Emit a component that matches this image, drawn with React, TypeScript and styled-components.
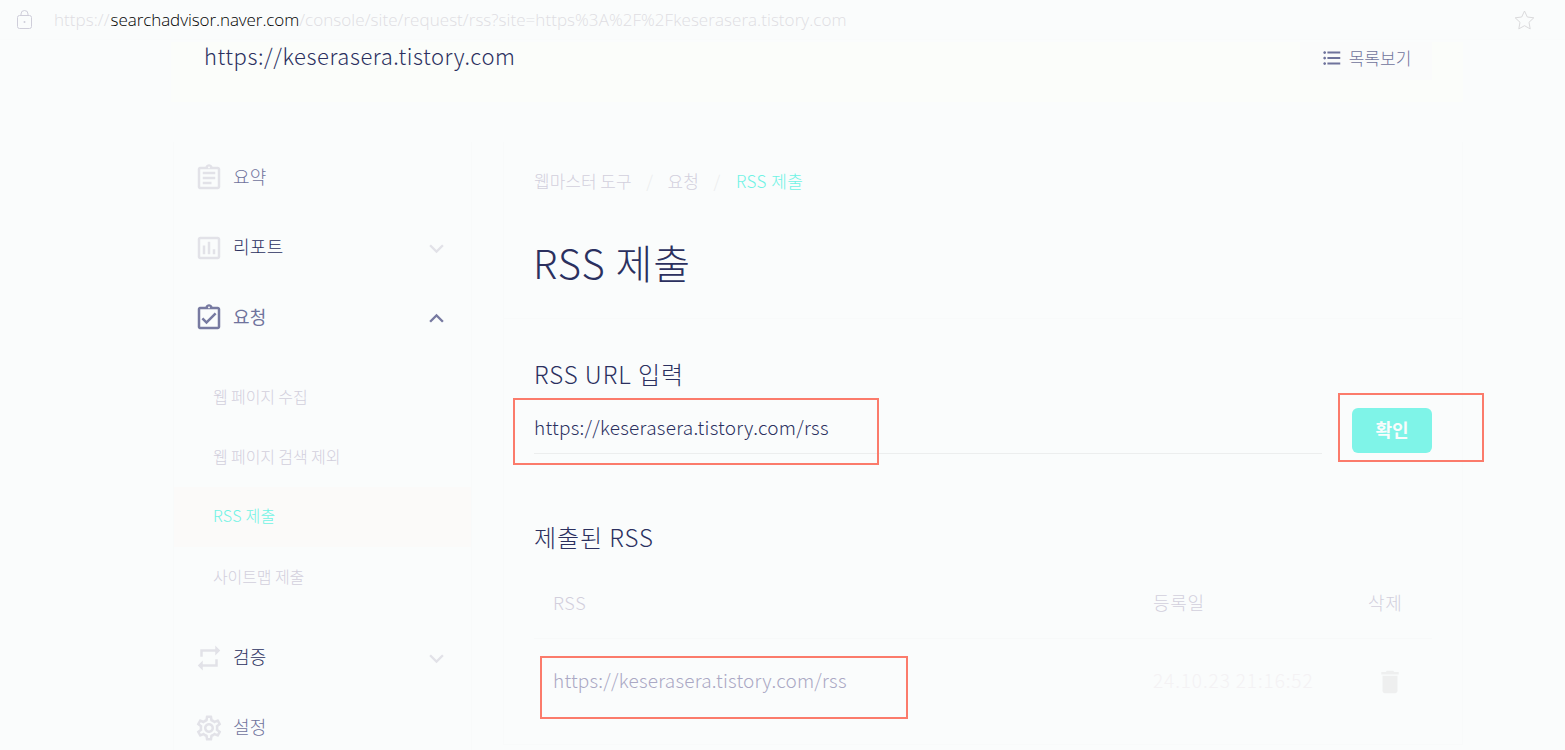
import React from "react";
import styled, { createGlobalStyle } from "styled-components";
import {
  MdDelete,
  MdFormatListBulleted,
  MdKeyboardArrowDown,
  MdKeyboardArrowUp,
  MdOutlineAssessment,
  MdOutlineAssignment,
  MdOutlineAssignmentTurnedIn,
  MdOutlineSettings,
  MdRepeat,
} from "react-icons/md";

const GlobalStyle = createGlobalStyle`
  * {
    box-sizing: border-box;
  }
  body {
    margin: 0;
    background: #fafcfc;
    font-family: "Noto Sans CJK KR", "Noto Sans", sans-serif;
    font-weight: 300;
    overflow: hidden;
  }
  h1, h2, p {
    margin: 0;
    font-weight: 300;
  }
`;

const PageDiv = styled.div`
  position: relative;
  width: 1565px;
  height: 750px;
  overflow: hidden;
`;

const AddressBarDiv = styled.div`
  height: 40px;
  padding: 0 30px 0 17px;
  display: flex;
  align-items: center;
  border-bottom: 1px solid #f9fbfb;
`;

const AddressP = styled.p`
  flex: 1;
  margin-left: 22px;
  font-family: "Open Sans", sans-serif;
  font-size: 17px;
  line-height: 38px;
  letter-spacing: 0.06px;
  color: #dfdee3;
  white-space: nowrap;
`;

const HostSpan = styled.span`
  margin-left: 1px;
  letter-spacing: -0.07px;
  color: #000;
`;

const SiteHeaderDiv = styled.header`
  width: 1292px;
  height: 60px;
  margin: 2px 0 0 171px;
  padding: 0 31px 0 33px;
  display: flex;
  justify-content: space-between;
  align-items: flex-start;
  background: #fbfdfa;
`;

const SiteP = styled.p`
  font-size: 22px;
  line-height: 26px;
  letter-spacing: 0.55px;
  color: #2b305f;
`;

const ListButton = styled.button`
  width: 132px;
  height: 38px;
  padding: 0 0 6px;
  display: flex;
  align-items: center;
  justify-content: center;
  gap: 6px;
  border: 0;
  background: #fafbfb;
  font: inherit;
  font-size: 17px;
  color: #6f739c;
`;

const ListLabelSpan = styled.span`
  margin-top: -2px;
`;

const BodyDiv = styled.div`
  display: flex;
  gap: 31px;
  margin: 40px 0 0 173px;
`;

const SideNav = styled.nav`
  width: 299px;
  height: 640px;
  border: 1px solid #f8fafa;
  border-width: 0 1px;
`;

const NavRowDiv = styled.div`
  height: 70px;
  padding: 2px 20px 0 20px;
  display: flex;
  align-items: center;
  color: #e2e2e8;
`;

const NavLabelSpan = styled.span<{ $color: string; $bold?: boolean }>`
  flex: 1;
  margin: -5px 0 0 9px;
  font-size: 18px;
  font-weight: ${(props) => (props.$bold ? 400 : 300)};
  letter-spacing: 0.3px;
  color: ${(props) => props.$color};
`;

const SubMenuDiv = styled.div`
  padding: 15px 0;
`;

const SubItemDiv = styled.div<{ $active?: boolean }>`
  height: 60px;
  padding-left: 39px;
  font-size: 16px;
  line-height: ${(props) => (props.$active ? 57 : 58)}px;
  letter-spacing: ${(props) => (props.$active ? 0.3 : -0.1)}px;
  color: ${(props) => (props.$active ? "#70f3e5" : "#d2cfdc")};
  background: ${(props) => (props.$active ? "#fbfaf9" : "transparent")};
`;

const MainDiv = styled.main`
  width: 960px;
`;

const TitleCardDiv = styled.div`
  height: 177px;
  padding: 26px 30px 0;
  border: 1px solid #f8fafa;
  border-width: 0 1px 1px;
`;

const BreadcrumbDiv = styled.div`
  display: flex;
  font-size: 17px;
  line-height: 26px;
  color: #d2cfdc;
`;

const SlashSpan = styled.span`
  width: 36px;
  text-align: center;
  color: #ecedee;
`;

const CurrentSpan = styled.span`
  margin-left: 1px;
  letter-spacing: 0.5px;
  color: #70f3e5;
`;

const TitleH1 = styled.h1`
  margin: 38px 0 0 -1px;
  font-size: 40px;
  line-height: 60px;
  letter-spacing: 1px;
  color: #2b305f;
`;

const ContentCardDiv = styled.div`
  height: 426px;
  padding: 35px 30px 0;
  border: 1px solid #f8fafa;
  border-width: 0 1px 1px;
`;

const SectionH2 = styled.h2`
  font-size: 24px;
  line-height: 40px;
  letter-spacing: 0.95px;
  color: #2b305f;
`;

const FormDiv = styled.div`
  display: flex;
  gap: 30px;
  margin: 14px 0 63px;
`;

const UrlInput = styled.input`
  width: 789px;
  height: 46px;
  padding: 0 0 8px;
  border: 0;
  border-bottom: 1px solid #eceeee;
  outline: 0;
  background: transparent;
  font: inherit;
  font-size: 19px;
  letter-spacing: 0.25px;
  color: #2b305f;
`;

const SubmitButton = styled.button`
  width: 80px;
  height: 45px;
  padding: 0 0 3px;
  border: 0;
  border-radius: 6px;
  background: #7ff4e8;
  font: inherit;
  font-size: 18px;
  font-weight: 700;
  color: #fafcfc;
`;

const TableRowDiv = styled.div<{ $head?: boolean }>`
  height: ${(props) => (props.$head ? 82 : 85)}px;
  padding: ${(props) => (props.$head ? "8px 0 0 19px" : "0 0 3px 19px")};
  display: grid;
  grid-template-columns: 600px 215px 44px;
  align-items: center;
  border-bottom: 1px solid ${(props) => (props.$head ? "#f7f9f9" : "transparent")};
  font-size: 18px;
  letter-spacing: 0.7px;
  color: #d2cfdc;
`;

const UrlCellSpan = styled.span`
  font-size: 19px;
  letter-spacing: 0.22px;
  color: #aaa8c4;
`;

const DateCellSpan = styled.span`
  font-size: 19px;
  letter-spacing: 0.9px;
  color: #f4f2f4;
`;

const DeleteCellSpan = styled.span`
  padding: 4px 0 0 7px;
  display: flex;
  color: #eeefef;
`;

// red annotation frames drawn over the page
const MarkDiv = styled.div<{ $x: number; $y: number; $w: number; $h: number }>`
  position: absolute;
  left: ${(props) => props.$x}px;
  top: ${(props) => props.$y}px;
  width: ${(props) => props.$w}px;
  height: ${(props) => props.$h}px;
  border: 2px solid #fb7b6b;
  pointer-events: none;
`;

const subItems = ["웹 페이지 수집", "웹 페이지 검색 제외", "RSS 제출", "사이트맵 제출"];

function LockIcon() {
  return (
    <svg width="15" height="20" viewBox="0 0 15 20" fill="none" stroke="#cfceda">
      <rect x="0.5" y="5.5" width="14" height="13" rx="2" />
      <path d="M4 5.500V4a3.500 3.500 0 0 1 7 0v1.500" />
      <circle cx="7.5" cy="12" r="1" fill="#cfceda" stroke="none" />
    </svg>
  );
}

function StarIcon() {
  return (
    <svg width="21" height="20" viewBox="0 0 21 20" fill="none" stroke="#dadadc" strokeLinejoin="round">
      <path d="M10.500 1l2.800 6 6.500.8-4.800 4.500 1.200 6.600-5.700-3.200-5.700 3.200L6 12.300 1.200 7.800l6.500-.8z" />
    </svg>
  );
}

function Sidebar() {
  return (
    <SideNav>
      <NavRowDiv>
        <MdOutlineAssignment size={30} />
        <NavLabelSpan $color="#6f739c">요약</NavLabelSpan>
      </NavRowDiv>
      <NavRowDiv>
        <MdOutlineAssessment size={30} />
        <NavLabelSpan $color="#2b305f">리포트</NavLabelSpan>
        <MdKeyboardArrowDown size={29} />
      </NavRowDiv>
      <NavRowDiv>
        <MdOutlineAssignmentTurnedIn size={30} color="#777aa1" />
        <NavLabelSpan $color="#6f739c" $bold>요청</NavLabelSpan>
        <MdKeyboardArrowUp size={29} color="#777aa1" />
      </NavRowDiv>
      <SubMenuDiv>
        {subItems.map((item) => (
          <SubItemDiv key={item} $active={item === "RSS 제출"}>
            {item}
          </SubItemDiv>
        ))}
      </SubMenuDiv>
      <NavRowDiv>
        <MdRepeat size={30} />
        <NavLabelSpan $color="#2b305f">검증</NavLabelSpan>
        <MdKeyboardArrowDown size={29} />
      </NavRowDiv>
      <NavRowDiv>
        <MdOutlineSettings size={30} />
        <NavLabelSpan $color="#6f739c">설정</NavLabelSpan>
      </NavRowDiv>
    </SideNav>
  );
}

export default function App() {
  return (
    <PageDiv>
      <GlobalStyle />
      <AddressBarDiv>
        <LockIcon />
        <AddressP>
          https://<HostSpan>searchadvisor.naver.com</HostSpan>
          /console/site/request/rss?site=https%3A%2F%2Fkeserasera.tistory.com
        </AddressP>
        <StarIcon />
      </AddressBarDiv>
      <SiteHeaderDiv>
        <SiteP>https://keserasera.tistory.com</SiteP>
        <ListButton>
          <MdFormatListBulleted size={22} />
          <ListLabelSpan>목록보기</ListLabelSpan>
        </ListButton>
      </SiteHeaderDiv>

      <BodyDiv>
        <Sidebar />
        <MainDiv>
          <TitleCardDiv>
            <BreadcrumbDiv>
              <span>웹마스터 도구</span>
              <SlashSpan>/</SlashSpan>
              <span>요청</span>
              <SlashSpan>/</SlashSpan>
              <CurrentSpan>RSS 제출</CurrentSpan>
            </BreadcrumbDiv>
            <TitleH1>RSS 제출</TitleH1>
          </TitleCardDiv>
          <ContentCardDiv>
            <SectionH2>RSS URL 입력</SectionH2>
            <FormDiv>
              <UrlInput defaultValue="https://keserasera.tistory.com/rss" />
              <SubmitButton>확인</SubmitButton>
            </FormDiv>
            <SectionH2>제출된 RSS</SectionH2>
            <TableRowDiv $head>
              <span>RSS</span>
              <span>등록일</span>
              <span>삭제</span>
            </TableRowDiv>
            <TableRowDiv>
              <UrlCellSpan>https://keserasera.tistory.com/rss</UrlCellSpan>
              <DateCellSpan>24.10.23 21:16:52</DateCellSpan>
              <DeleteCellSpan>
                <MdDelete size={30} />
              </DeleteCellSpan>
            </TableRowDiv>
          </ContentCardDiv>
        </MainDiv>
      </BodyDiv>

      <MarkDiv $x={513} $y={398} $w={366} $h={67} />
      <MarkDiv $x={1338} $y={393} $w={146} $h={69} />
      <MarkDiv $x={540} $y={656} $w={368} $h={63} />
    </PageDiv>
  );
}
